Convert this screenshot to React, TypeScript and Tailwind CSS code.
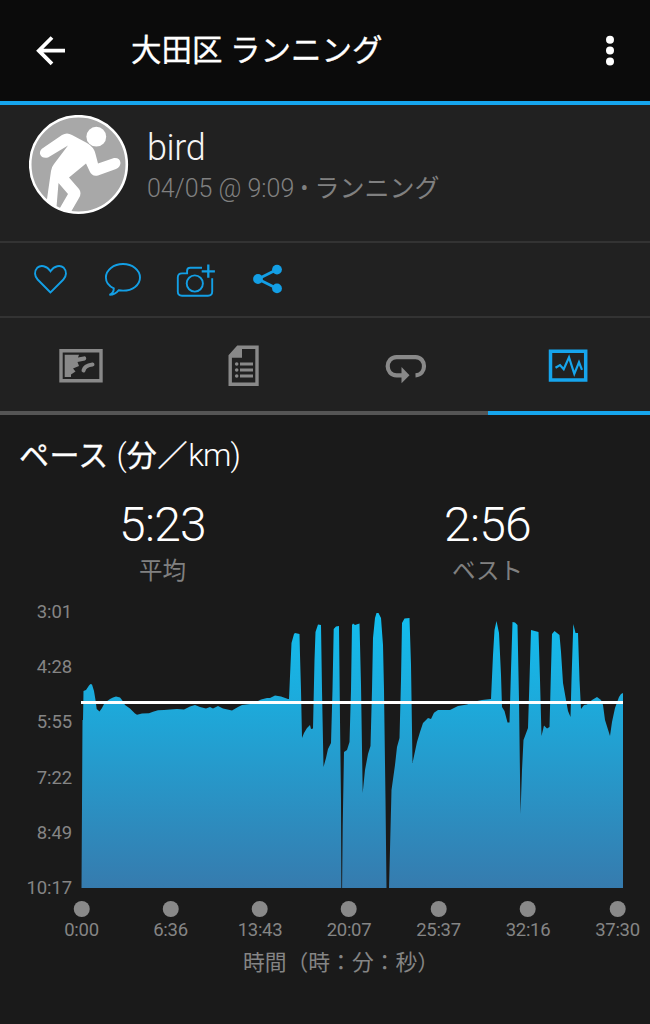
import type { ReactNode } from 'react';

type Point = [number, number];

const AXIS_X = [
  { label: '0:00', left: 81.5 },
  { label: '6:36', left: 170.5 },
  { label: '13:43', left: 260 },
  { label: '20:07', left: 349 },
  { label: '25:37', left: 438.5 },
  { label: '32:16', left: 528 },
  { label: '37:30', left: 617.5 },
];

const AXIS_Y = ['3:01', '4:28', '5:55', '7:22', '8:49', '10:17'];

// Pace samples in chart units, smaller y = faster
const PACE: Point[] = [
  [83, 720], [83.5, 691], [86, 690], [89, 685.5], [90.5, 684], [92, 684.5], [94, 691], [95.5, 700],
  [96.7, 709], [99.5, 711.5], [102, 708], [104.5, 703], [110, 699], [113, 697.5], [116, 696.5],
  [120, 697.5], [122, 700], [125, 705], [130, 708.5], [135, 713.5], [137, 714.7], [142, 713.5],
  [149, 713.3], [153, 711.7], [158, 710.3], [164, 710], [170, 709.5], [177, 709], [184, 709.5],
  [190, 706.5], [195, 705], [200, 707], [206, 708.5], [210, 707], [213, 708.5], [218, 706],
  [223, 708.5], [232, 710.5], [238, 707], [242, 705], [250, 704], [256, 702], [261, 699.5],
  [267, 698], [270, 698], [275, 695.5], [281, 696.5], [288, 699], [289, 699], [290.5, 665],
  [291.5, 643], [294, 634], [295, 633], [299.5, 634], [300, 655], [301, 690], [302, 738], [304, 733],
  [307, 728], [310, 725], [311, 729], [313, 728.5], [314.5, 660], [315.5, 632], [318, 624.5],
  [321, 625], [322, 690], [323.5, 767], [326, 758], [328, 749], [331, 743], [332.5, 690],
  [333.7, 629], [336, 626.5], [339, 626], [340, 720], [341, 800], [341.3, 888], [342.1, 888],
  [342.7, 826], [344, 752], [347, 750], [349.5, 742], [351, 690], [352, 625], [353, 623.5],
  [355, 625], [359.5, 623.5], [361, 685], [362.7, 793], [365, 770], [368, 754], [370.5, 746],
  [372, 690], [373, 638], [375, 618], [376.5, 613], [378.5, 613], [381, 618], [383, 645], [384, 690],
  [385.5, 800], [386.5, 888], [389, 888], [390.5, 830], [391.5, 790], [395, 765], [397, 747],
  [399.5, 738], [401, 680], [402, 623], [404.5, 618.5], [409.5, 618], [411, 665], [412.5, 763],
  [417, 742], [420, 732], [423, 723], [428, 718], [431, 719], [434, 712.7], [438, 710], [450, 710],
  [458, 706], [467, 704.5], [475, 701.5], [482, 700], [491, 699], [493, 655], [494.5, 630],
  [496.5, 621], [499, 633], [501, 675], [502, 707], [504.5, 711], [507.5, 722.5], [509.5, 722.5],
  [511, 670], [512.5, 622], [515, 622.5], [517.5, 625], [519, 700], [520.5, 814], [522, 770],
  [523.5, 740], [528, 728], [529.5, 680], [531, 630], [538.5, 632], [540, 680], [541.5, 736],
  [544, 725.5], [547, 728.5], [549.5, 727], [551, 670], [552, 634], [554.5, 631], [559.5, 635],
  [561, 652], [563, 683], [566, 700], [568, 711], [570.5, 717], [571.5, 680], [573.3, 624],
  [575.5, 633], [578, 633], [579.5, 680], [581, 709], [584, 705], [587, 704.5], [592, 700],
  [597, 697], [601, 700], [603, 705], [605, 720], [610, 736], [612, 722], [615, 708], [619, 697],
  [621, 694], [623, 693],
];

function Header() {
  return (
    <header className="flex h-[101px] items-center bg-[#0b0b0b] text-white">
      <svg className="ml-9 h-[30px] w-[30px]" viewBox="0 0 30 30" fill="none" stroke="currentColor" strokeWidth="3.8">
        <path d="M16 1.5 2.8 14.7 16 27.9M3 14.7h26" />
      </svg>
      <h1 className="ml-[65px] pt-[2px] text-[30.5px] leading-none font-normal whitespace-pre [-webkit-text-stroke:0.3px_white]">
        大田区 ランニング
      </h1>
      <svg className="mr-[34px] ml-auto h-8 w-3" viewBox="0 0 12 32" fill="currentColor">
        <circle cx="6" cy="4.7" r="4" />
        <circle cx="6" cy="15.5" r="4" />
        <circle cx="6" cy="26.4" r="4" />
      </svg>
    </header>
  );
}

function Avatar() {
  return (
    <svg className="h-[100px] w-[100px] shrink-0" viewBox="0 0 100 100">
      <defs>
        <clipPath id="avatar">
          <circle cx="49.5" cy="49.5" r="48" />
        </clipPath>
      </defs>
      <circle cx="49.5" cy="49.5" r="48.4" fill="#a8a8a8" />
      <g clipPath="url(#avatar)" fill="#fff">
        <circle cx="67.3" cy="21.7" r="9.9" />
        <path d="M33 20Q38 17 43 20L58 28Q65 32 66.5 39L69 48.5 85 43Q91 42.5 91.5 48Q91 52.5 87 54L69 60.5Q63 62 60.5 56L57 48.5 40 62.5 50 74Q53 78 50 83L39 102 28 98 39 79 29.5 68 27 98 16 98 22 56Q22.5 52 25 49L39 30.5 19 42.5Q13 44 11 39Q10.5 35 14 33Z" />
      </g>
      <circle cx="49.5" cy="49.5" r="48.3" fill="none" stroke="#fff" strokeWidth="2.6" />
    </svg>
  );
}

function Profile() {
  return (
    <section className="flex h-[138px] border-b-2 border-[#333] pt-[10px] pl-[29px]">
      <Avatar />
      <div className="ml-[18px] pt-[14px]">
        <p className="text-[36px] leading-[38px] font-light tracking-[-0.4px] text-[#f4f4f4]">bird</p>
        <p className="mt-[7px] text-[25px] leading-[30px] font-light whitespace-pre text-[#808080]">
          04/05 @ 9:09 • <span className="font-normal">ランニング</span>
        </p>
      </div>
    </section>
  );
}

function Actions() {
  return (
    <section className="flex h-[75px] items-center border-b-2 border-[#333] text-[#139fe5]">
      <svg className="ml-[33px] h-9 w-9" viewBox="0 0 36 36" fill="none" stroke="currentColor" strokeWidth="1.9">
        <path d="M17.5 30.5 4.6 17.5C1.5 14.3 1 9 4.2 5.8c3.5-3.1 9.5-2.2 13.3 3.4 3.8-5.6 9.8-6.5 13.3-3.4 3.2 3.2 2.7 8.5-.4 11.7Z" />
      </svg>
      <svg className="ml-[35px] h-9 w-10" viewBox="0 0 40 36" fill="none" stroke="currentColor" strokeWidth="1.9">
        <path d="M9.8 26.3C4.8 24 1.9 19.9 1.9 15.5 1.9 7.9 9.6 2 19 2s17 5.9 17 13.5-7.5 13.1-17 13.1q-2 0-4.200-.4c-2.300 2.700-4.500 4.900-9.300 4.700 3.200-1.500 4.400-3.100 4.300-6.600Z" />
      </svg>
      <svg className="ml-[32px] h-9 w-10" viewBox="0 0 40 36" fill="none" stroke="currentColor" strokeWidth="1.9">
        <path d="M26 5.7H14.2q-3.1 0-3.1 3.1v2.6H6q-4.2 0-4.2 4.2v14q0 4.2 4.2 4.2h26q4.2 0 4.2-4.2V16.2" />
        <circle cx="18.8" cy="21.5" r="8.1" />
        <path d="M25.7 9.3h13.2M32.3 2.6v13.2" strokeWidth="2.3" />
      </svg>
      <svg className="mb-[2px] ml-[37px] h-[30px] w-[30px]" viewBox="0 0 30 30" fill="currentColor">
        <path d="M5 15 24 5.5M5 15l19 9.5" stroke="currentColor" strokeWidth="2.8" />
        <circle cx="5" cy="15" r="4.9" />
        <circle cx="24" cy="5.6" r="4.9" />
        <circle cx="24" cy="24.4" r="4.9" />
      </svg>
    </section>
  );
}

function Tab({ active = false, children }: { active?: boolean; children: ReactNode }) {
  return (
    <button
      className={`flex items-center justify-center border-b-4 pt-[2px] ${
        active ? 'border-[#16a5ed] text-[#16a5ed]' : 'border-[#555] text-[#898989]'
      }`}
    >
      {children}
    </button>
  );
}

function Tabs() {
  return (
    <nav className="grid h-[97px] grid-cols-4">
      <Tab>
        <svg className="h-[42px] w-11" viewBox="0 0 44 42" fill="currentColor">
          <path d="M2 5.7h40v30H2Z" fill="none" stroke="currentColor" strokeWidth="3.4" />
          <path d="M5.7 9.7H20L19 12.5 26 11.3Q28.5 13.500 26 15.500L18.500 17 20 21 14 23.500 16.500 26.500 12 29.500V32H5.700Z" />
          <path d="M24.500 25.500Q25.500 20.500 33.500 19.500" fill="none" stroke="currentColor" strokeWidth="4" strokeLinecap="round" />
        </svg>
      </Tab>
      <Tab>
        <svg className="h-[42px] w-8" viewBox="0 0 32 42" fill="currentColor">
          <path d="M10 2.3h19v37H2.200V11Z" fill="none" stroke="currentColor" strokeWidth="3.4" />
          <path d="M10 2h4v10.700H2V10Z" />
          <path d="M12 17.500h13v3H12Zm0 6h13v3H12Zm0 6h13v3H12Z" />
          <circle cx="8.7" cy="19" r="1.8" />
          <circle cx="8.7" cy="25" r="1.8" />
          <circle cx="8.7" cy="31" r="1.8" />
        </svg>
      </Tab>
      <Tab>
        <svg className="h-[42px] w-[42px]" viewBox="0 0 42 42" fill="currentColor">
          <path
            d="M18 30.3h-6.500C6 30.300 2.700 26 2.700 21.300s3.300-9.200 8.800-9.200h19C36 12.100 39 16.600 39 21.300c0 4.600-3 8.800-8.500 9"
            fill="none"
            stroke="currentColor"
            strokeWidth="4.2"
          />
          <path d="M16.5 22 24.5 30.2l-8 8Z" />
        </svg>
      </Tab>
      <Tab active>
        <svg className="mr-px h-[42px] w-10" viewBox="0 0 40 42" fill="none" stroke="currentColor">
          <path d="M2.5 6.3h35.2V35H2.5Z" strokeWidth="3.5" />
          <path d="m7.5 22.800 4.500-2.700 3.700 4.200L21 12.300 26.300 28.800 31 17.300l3 7.500" strokeWidth="2.2" />
        </svg>
      </Tab>
    </nav>
  );
}

function Stat({ value, label }: { value: string; label: string }) {
  return (
    <div className="flex flex-col items-center">
      <span className="text-[48px] leading-[56px] font-light tracking-[-0.8px] text-white">{value}</span>
      <span className="mt-[3px] text-[23.5px] leading-[30px] font-normal text-[#808080]">{label}</span>
    </div>
  );
}

function PaceChart() {
  const line = PACE.map(([x, y]) => `${x},${y}`).join(' ');

  return (
    <div className="mt-[16px]">
      <div className="flex">
        <div className="flex h-[296px] w-[81px] flex-col justify-between pr-[9px] text-right text-[18.5px] leading-[20px] tracking-[-0.1px] text-[#858585]">
          {AXIS_Y.map((label) => (
            <span key={label}>{label}</span>
          ))}
        </div>
        <svg className="h-[286px] w-[543px]" viewBox="81 602 543 286">
          <defs>
            <linearGradient id="pace" gradientUnits="userSpaceOnUse" x1="0" y1="612" x2="0" y2="888">
              <stop offset="0" stopColor="#12beef" />
              <stop offset="0.36" stopColor="#1ea8d9" />
              <stop offset="1" stopColor="#367bae" />
            </linearGradient>
          </defs>
          <polygon points={`81.5,888 82.5,720 ${line} 623,888`} fill="url(#pace)" />
          <path d="M81 702.5h542" stroke="#fff" strokeWidth="3" />
        </svg>
      </div>

      {/* Time axis */}
      <div className="relative mt-[3px] h-[39px] text-[18.5px] leading-[20px] tracking-[-0.3px] text-[#858585]">
        {AXIS_X.map(({ label, left }) => (
          <div key={label} className="absolute flex -translate-x-1/2 flex-col items-center" style={{ left }}>
            <span className="h-4 w-4 rounded-full bg-[#898989]" />
            <span className="mt-[3px]">{label}</span>
          </div>
        ))}
      </div>
      <p className="mt-[8px] pl-[32px] text-center text-[21.8px] leading-[30px] text-[#858585]">時間（時：分：秒）</p>
    </div>
  );
}

export default function App() {
  return (
    <main
      lang="ja"
      className="h-[1024px] w-[650px] overflow-hidden bg-[#1a1a1a] font-[Roboto,'Noto_Sans_CJK_JP',sans-serif]"
    >
      <Header />
      <div className="border-t-4 border-[#16a5ed] bg-[#212121]">
        <Profile />
        <Actions />
        <Tabs />
      </div>
      <section className="pt-[21px]">
        <h2 className="h-[38px] pl-[19px] text-[30px] leading-[38px] whitespace-pre text-white">
          <span className="tracking-[0.4px] [-webkit-text-stroke:0.3px_white]">ペース</span>
          <span className="text-[32px] font-light"> (</span>
          <span className="tracking-[0.8px] [-webkit-text-stroke:0.3px_white]">分／</span>
          <span className="text-[32px] font-light tracking-[-1px]">km)</span>
        </h2>
        <div className="mt-[23px] grid grid-cols-2">
          <Stat value="5:23" label="平均" />
          <Stat value="2:56" label="ベスト" />
        </div>
        <PaceChart />
      </section>
    </main>
  );
}
